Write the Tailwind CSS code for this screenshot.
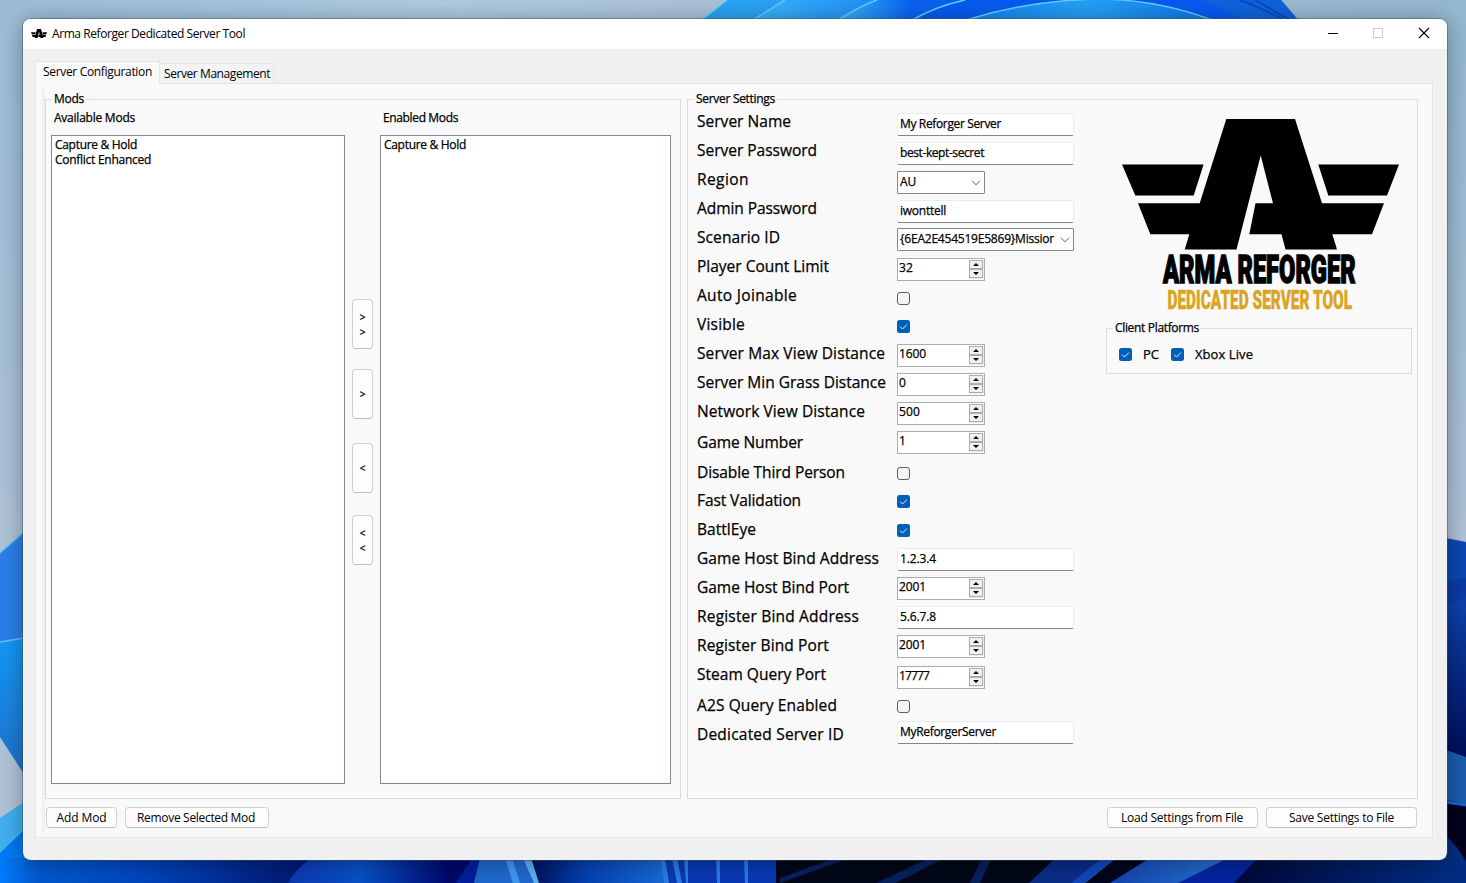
<!DOCTYPE html>
<html lang="en">
<head>
<meta charset="utf-8">
<title>Arma Reforger Dedicated Server Tool</title>
<script src="https://cdn.jsdelivr.net/npm/@tailwindcss/browser@4"></script>
</head>
<body class="relative h-[883px] w-[1466px] overflow-hidden bg-[#a4c0d8] font-['Open_Sans',sans-serif] text-[12px] font-medium leading-[15px] text-black [-webkit-text-stroke:0.25px_black]">

<!-- Desktop wallpaper -->
<svg class="absolute inset-0" width="1466" height="883" viewBox="0 0 1466 883">
  <defs>
    <linearGradient id="sky" x1="0" y1="0" x2="1" y2="0"><stop offset="0" stop-color="#9cbcd6"/><stop offset=".3" stop-color="#adcae0"/><stop offset=".6" stop-color="#a9bdd2"/><stop offset="1" stop-color="#94b8d0"/></linearGradient>
    <linearGradient id="haze" x1="0" y1="0" x2="0" y2="1"><stop offset="0" stop-color="#a9bfd6" stop-opacity="0"/><stop offset=".6" stop-color="#afc2d6"/></linearGradient>
    <linearGradient id="p1" x1="0" x2="1" y1="0" y2="0"><stop offset="0" stop-color="#2ba4f2"/><stop offset="1" stop-color="#1f8cf4"/></linearGradient>
    <linearGradient id="p2" x1="0" x2="1" y1="0" y2="0"><stop offset="0" stop-color="#38b6fa"/><stop offset=".45" stop-color="#0a62f0"/><stop offset="1" stop-color="#0a62f0"/></linearGradient>
    <linearGradient id="p3" x1="0" x2="1" y1="0" y2="0"><stop offset="0" stop-color="#1583ee"/><stop offset=".5" stop-color="#24a0f6"/><stop offset="1" stop-color="#1173ea"/></linearGradient>
    <linearGradient id="b0" x1="0" x2="1" y1="0" y2="0"><stop offset="0" stop-color="#007cfa"/><stop offset=".12" stop-color="#0059cc"/><stop offset=".45" stop-color="#0044bc"/><stop offset="1" stop-color="#001468"/></linearGradient>
    <linearGradient id="b1" x1="0" x2="1" y1="0" y2="0"><stop offset="0" stop-color="#0e38b0"/><stop offset=".35" stop-color="#0850c6"/><stop offset=".75" stop-color="#00086c"/><stop offset="1" stop-color="#000660"/></linearGradient>
    <linearGradient id="b2" x1="0" x2="1" y1="0" y2="0"><stop offset="0" stop-color="#001058"/><stop offset=".4" stop-color="#0440b0"/><stop offset="1" stop-color="#1868d4"/></linearGradient>
    <linearGradient id="b3" x1="0" x2="1" y1="0" y2="0"><stop offset="0" stop-color="#1145b0"/><stop offset="1" stop-color="#2a70cc"/></linearGradient>
    <linearGradient id="b4" x1="0" x2="1" y1="0" y2="0"><stop offset="0" stop-color="#000838"/><stop offset="1" stop-color="#003088"/></linearGradient>
    <linearGradient id="r1" x1="0" x2="0" y1="0" y2="1"><stop offset="0" stop-color="#0c44ac"/><stop offset="1" stop-color="#000c58"/></linearGradient>
    <linearGradient id="l1" x1="0" x2="0" y1="0" y2="1"><stop offset="0" stop-color="#1398f4"/><stop offset="1" stop-color="#2070cc"/></linearGradient>
  </defs>
  <rect width="1466" height="883" fill="url(#sky)"/>
  <rect y="40" width="1466" height="843" fill="url(#haze)"/>
  <!-- top petals -->
  <path d="M702 20L727 0H1281L1298 20Z" fill="url(#p1)"/>
  <path d="M753 20L785 0H1281L1298 20Z" fill="url(#p2)"/>
  <path d="M838 20Q858 7 877 0H1000V20Z" fill="url(#p2)"/>
  <path d="M912 20Q937 6 965 0H1195Q1224 7 1246 20Z" fill="#075af0"/>
  <path d="M966 20Q1030 0 1100 -1Q1160 0 1212 20Z" fill="url(#p3)"/>
  <path d="M1195 0Q1224 7 1246 20H1298L1281 0Z" fill="#0f63dc"/>
  <g fill="none" stroke="#62cdf8" stroke-width="1.500"><path d="M702 20L727 0M753 20L785 0M838 20Q858 7 877 0M912 20Q937 6 965 0M966 20Q1030 0 1100 -1Q1160 0 1212 20"/></g>
  <path d="M1240 0Q1266 10 1284 20M1255 0L1290 20" fill="none" stroke="#0848c4" stroke-width="2"/>
  <!-- left petals -->
  <path d="M0 553L24 532V650H0Z" fill="#2c7fe8"/>
  <path d="M0 642L24 638V774L0 737Z" fill="url(#l1)"/>
  <path d="M0 553L24 532M0 642L24 638" stroke="#58c4f4" stroke-width="1.500"/>
  <path d="M0 818L24 802V883H0Z" fill="#40b0f0"/>
  <path d="M0 853L24 830V883H0Z" fill="#0078f6"/>
  <!-- bottom petals -->
  <path d="M0 858H320V883H0Z" fill="url(#b0)"/>
  <path d="M288 883Q296 868 312 858H500V883Z" fill="url(#b1)"/>
  <path d="M456 883L472 858H510V883Z" fill="#00209a"/>
  <path d="M474 883L480 858H530L539 883Z" fill="#2068cc"/>
  <path d="M505 858L513 883H520L512 858Z" fill="#3e98ec"/>
  <path d="M523 858L534 883H539L531 858Z" fill="#58b0f0"/>
  <path d="M531 858H664V883H539Z" fill="url(#b2)"/>
  <path d="M660 858H776V883H664Z" fill="#0838b4"/>
  <path d="M660 858H665L669 883H664ZM672 858H677L682 883H677ZM684 858H688V883H686ZM716 858H720V883H717ZM744 858H748V883H745Z" fill="#2a7ce0"/>
  <path d="M776 858H1070L1035 883H776Z" fill="#020818"/>
  <path d="M850 858H835L780 878V883ZM930 858H945L895 883H876ZM982 858H992L980 883H970Z" fill="#08205c"/>
  <path d="M1056 858H1110L1080 883H1029Z" fill="#0a2c84"/>
  <path d="M1102 858H1116L1085 883H1071Z" fill="#1146bc"/>
  <path d="M1116 858H1240L1190 883H1085Z" fill="#010620"/>
  <path d="M1150 858H1230L1180 883H1110Z" fill="url(#b3)"/>
  <path d="M1228 858H1260L1235 883H1178Z" fill="#0524a0"/>
  <path d="M1258 858H1466V883H1234Z" fill="url(#b4)"/>
  <!-- right petals -->
  <path d="M1446 538L1466 542V883H1446Z" fill="#0a48b4"/>
  <path d="M1446 582L1466 578V883H1446Z" fill="#0a3aa4"/>
  <path d="M1446 605L1466 597V760H1446Z" fill="url(#r1)"/>
  <path d="M1446 750L1466 757V808H1446Z" fill="#1a5cac"/>
  <path d="M1446 800L1466 804V883H1446Z" fill="#00021c"/>
  <path d="M1446 802L1466 805" stroke="#1464dc" stroke-width="3"/>
  <path d="M1446 836Q1458 846 1466 862V883H1446Z" fill="#002c80"/>
</svg>

<!-- Application window -->
<main class="absolute left-[23px] top-[19px] flex h-[841px] w-[1424px] flex-col overflow-hidden rounded-lg bg-[#f0f0f0] shadow-[0_0_0_1px_rgba(60,80,100,0.45),0_2px_22px_rgba(0,0,0,0.35)]">
  <header class="flex h-[30px] shrink-0 items-center bg-white pb-px pl-2 [-webkit-text-stroke:0]">
    <svg width="16" height="9" viewBox="1122 119 277 131" preserveAspectRatio="none"><use href="#wings"/></svg>
    <h1 class="ml-[5px] font-normal whitespace-nowrap"><span data-w="193">Arma Reforger Dedicated Server Tool</span></h1>
    <svg class="mb-px ml-auto mr-[17px]" width="103" height="12" viewBox="0 0 103 12" fill="none">
      <path d="M1 6.500H11" stroke="#000"/>
      <rect x="46.500" y="1.500" width="9" height="9" stroke="#ccc"/>
      <path d="M92 1L102 11M102 1L92 11" stroke="#000" stroke-width="1.100"/>
    </svg>
  </header>

  <div class="flex flex-1 flex-col pl-3 pr-[14px] pt-3">
    <nav class="flex h-[22px] items-end font-normal [-webkit-text-stroke:0]">
      <div class="z-10 -mb-px h-[23px] w-[125px] border border-b-0 border-[#e5e5e5] bg-[#f9f9f9] pl-[7px] pt-[2px] whitespace-nowrap"><span data-w="109">Server Configuration</span></div>
      <div class="h-5 w-[114px] border border-b-0 border-l-0 border-[#e5e5e5] bg-[#f3f3f3] pl-1 pt-[2px] whitespace-nowrap"><span data-w="106">Server Management</span></div>
    </nav>

    <section class="flex h-[755px] flex-col border border-[#e5e5e5] bg-[#f9f9f9] pl-[6px] pr-[14px] pt-1 shadow-[2px_2px_0_#f3f3f3]">
      <div class="flex h-[745px] flex-col border-l-[3px] border-[#f0f0f0]">
        <div class="flex gap-[6px] pt-[11px]">

          <!-- Mods -->
          <fieldset class="relative flex h-[700px] w-[636px] border border-[#dcdcdc] pl-[5px]">
            <div class="absolute -top-[9px] left-[6px] bg-[#f9f9f9] px-[2px]"><span data-w="30">Mods</span></div>
            <div class="w-[294px] pt-[10px]">
              <div class="h-[25px] pl-[3px]"><span data-w="81">Available Mods</span></div>
              <div class="h-[649px] border border-[#828790] bg-white pl-[3px] pt-px">
                <div><span data-w="82">Capture &amp; Hold</span></div>
                <div><span data-w="96">Conflict Enhanced</span></div>
              </div>
            </div>
            <div class="ml-[7px] flex w-[21px] flex-col pt-[199px] text-center text-[10px]">
              <button class="h-[50px] rounded border border-[#d0d0d0] border-b-[#bdbdbd] bg-[#fdfdfd] pt-0.5">&gt;<br>&gt;</button>
              <button class="mt-5 h-[50px] rounded border border-[#d0d0d0] border-b-[#bdbdbd] bg-[#fdfdfd]">&gt;</button>
              <button class="mt-6 h-[50px] rounded border border-[#d0d0d0] border-b-[#bdbdbd] bg-[#fdfdfd]">&lt;</button>
              <button class="mt-[22px] h-[50px] rounded border border-[#d0d0d0] border-b-[#bdbdbd] bg-[#fdfdfd] pt-0.5">&lt;<br>&lt;</button>
            </div>
            <div class="ml-[7px] w-[291px] pt-[10px]">
              <div class="h-[25px] pl-[3px]"><span data-w="75">Enabled Mods</span></div>
              <div class="h-[649px] border border-[#828790] bg-white pl-[3px] pt-px">
                <div><span data-w="82">Capture &amp; Hold</span></div>
              </div>
            </div>
          </fieldset>

          <!-- Server settings -->
          <fieldset class="relative flex h-[700px] w-[731px] border border-[#dcdcdc] pl-[9px]">
            <div class="absolute -top-[9px] left-[6px] bg-[#f9f9f9] px-[2px]"><span data-w="79">Server Settings</span></div>
            <div id="settings" class="w-[409px] pt-[7px]"></div>

            <div class="flex flex-col pt-[19px]">
              <svg width="306" height="194" viewBox="1106 119 306 194">
                <g id="wings">
                  <path d="M1226.300 119H1295L1322 203.300H1384L1372 234.300H1332.300L1337 249.500H1285.500L1281.500 234.300H1249.300L1255.500 203.300H1273L1260.700 155.500L1236.500 249.500H1184.700L1189.300 234.300H1150.300L1138 203.300H1199.700Z"/>
                  <path d="M1122 164.600H1203.600L1193.700 195.500H1135.300ZM1318.300 164.600H1399L1387 195.500H1328.300Z"/>
                </g>
                <g transform="translate(1163 282.500)"><text data-scale="192.500" font-family="Roboto" font-weight="900" font-size="38" stroke="#000" stroke-width="1.500">ARMA REFORGER</text></g>
                <g transform="translate(1167.500 308.800)"><text data-scale="184.500" font-family="Roboto" font-weight="900" font-size="26.500" fill="#daa520" stroke="#daa520" stroke-width=".4">DEDICATED SERVER TOOL</text></g>
              </svg>
              <div class="relative mt-[15px] flex h-[46px] items-center border border-[#dcdcdc] pl-3 pt-[7px]">
                <div class="absolute -top-[9px] left-[6px] bg-[#f9f9f9] px-[2px]"><span data-w="84">Client Platforms</span></div>
                <svg class="mr-[11px] shrink-0" width="13" height="13" viewBox="0 0 13 13"><rect width="13" height="13" rx="2.500" fill="#005fb8"/><path d="M3.200 6.700L5.500 9L10 4.500" fill="none" stroke="#fff" stroke-width=".9"/></svg>
                <span class="text-[13px]" data-w="16">PC</span>
                <svg class="ml-[12px] mr-[11px] shrink-0" width="13" height="13" viewBox="0 0 13 13"><rect width="13" height="13" rx="2.500" fill="#005fb8"/><path d="M3.200 6.700L5.500 9L10 4.500" fill="none" stroke="#fff" stroke-width=".9"/></svg>
                <span class="text-[13px]" data-w="58">Xbox Live</span>
              </div>
            </div>
          </fieldset>
        </div>

        <footer class="mt-2 flex h-[21px] pl-px font-normal [-webkit-text-stroke:0]">
          <button class="h-[21px] w-[71px] rounded border border-[#d0d0d0] border-b-[#bdbdbd] bg-[#fdfdfd] whitespace-nowrap"><span data-w="50">Add Mod</span></button>
          <button class="ml-2 h-[21px] w-[144px] rounded border border-[#d0d0d0] border-b-[#bdbdbd] bg-[#fdfdfd] pr-0.5 whitespace-nowrap"><span data-w="118">Remove Selected Mod</span></button>
          <button class="ml-auto h-[21px] w-[151px] rounded border border-[#d0d0d0] border-b-[#bdbdbd] bg-[#fdfdfd] pr-px whitespace-nowrap"><span data-w="122">Load Settings from File</span></button>
          <button class="ml-2 mr-px h-[21px] w-[151px] rounded border border-[#d0d0d0] border-b-[#bdbdbd] bg-[#fdfdfd] whitespace-nowrap"><span data-w="105">Save Settings to File</span></button>
        </footer>
      </div>
    </section>
  </div>
</main>

<script>
const text = (t, w) => `<span data-w="${w}">${t}</span>`;
const controls = {
  entry: (t, w) => `<div class="flex h-[23px] w-[177px] items-center rounded-[2px] border border-[#ececec] border-b-[#868686] bg-white pb-0.5 pl-0.5 whitespace-nowrap">${text(t, w)}</div>`,
  combo: (t, w, wide) => `<div class="${wide ? 'w-[177px]' : 'w-[88px]'} flex h-[23px] items-center justify-between rounded-[1px] border border-[#868686] bg-white pb-0.5 pl-0.5 pr-[3px] whitespace-nowrap">${text(t, w)}<svg class="mt-0.5" width="10" height="6" viewBox="0 0 10 6"><path d="M1 .8L5 4.800L9 .8" fill="none" stroke="#5f5f5f"/></svg></div>`,
  spin: (t, w) => `<div class="flex h-[23px] w-[88px] justify-between border border-[#ababb0] bg-white pl-px pt-px"><span>${text(t, w)}</span><svg width="15" height="19" viewBox="0 0 15 19"><rect width="15" height="19" fill="#ececec"/><rect x=".5" y=".5" width="13" height="8" fill="#f0f0f0" stroke="#acacac"/><rect x=".5" y="9.500" width="13" height="8" fill="#f0f0f0" stroke="#acacac"/><path d="M7 3L10 6H4ZM7 15L10 12H4Z"/></svg></div>`,
  off: () => `<svg width="13" height="13" viewBox="0 0 13 13"><rect x=".5" y=".5" width="12" height="12" rx="2.500" fill="#f5f5f5" stroke="#5e5e5e"/></svg>`,
  on: () => `<svg width="13" height="13" viewBox="0 0 13 13"><rect width="13" height="13" rx="2.500" fill="#005fb8"/><path d="M3.200 6.700L5.500 9L10 4.500" fill="none" stroke="#fff" stroke-width=".9"/></svg>`
};
// label, label width, row height, control offset, control kind, value, value width, wide
const rows = [
  ['Server Name', 94, 'h-[29px]', 'mt-[6px]', 'entry', 'My Reforger Server', 101],
  ['Server Password', 120, 'h-[29px]', 'mt-[6px]', 'entry', 'best-kept-secret', 84],
  ['Region', 52, 'h-[29px]', 'mt-[6px]', 'combo', 'AU', 16],
  ['Admin Password', 120, 'h-[29px]', 'mt-[6px]', 'entry', 'iwonttell', 46],
  ['Scenario ID', 83, 'h-[29px]', 'mt-[5px]', 'combo', '{6EA2E454519E5869}Missior', 154, true],
  ['Player Count Limit', 132, 'h-[29px]', 'mt-[6px]', 'spin', '32', 14],
  ['Auto Joinable', 100, 'h-[29px]', 'mt-[11px]', 'off'],
  ['Visible', 48, 'h-[29px]', 'mt-[10px]', 'on'],
  ['Server Max View Distance', 188, 'h-[29px]', 'mt-[5px]', 'spin', '1600', 27],
  ['Server Min Grass Distance', 189, 'h-[29px]', 'mt-[5px]', 'spin', '0', 7],
  ['Network View Distance', 168, 'h-[31px]', 'mt-[5px]', 'spin', '500', 21],
  ['Game Number', 106, 'h-[30px]', 'mt-[3px]', 'spin', '1', 7],
  ['Disable Third Person', 148, 'h-[28px]', 'mt-[9px]', 'off'],
  ['Fast Validation', 104, 'h-[29px]', 'mt-[9px]', 'on'],
  ['BattlEye', 59, 'h-[29px]', 'mt-[9px]', 'on'],
  ['Game Host Bind Address', 182, 'h-[29px]', 'mt-[4px]', 'entry', '1.2.3.4', 36],
  ['Game Host Bind Port', 152, 'h-[29px]', 'mt-[4px]', 'spin', '2001', 27],
  ['Register Bind Address', 162, 'h-[29px]', 'mt-[4px]', 'entry', '5.6.7.8', 36],
  ['Register Bind Port', 132, 'h-[29px]', 'mt-[4px]', 'spin', '2001', 27],
  ['Steam Query Port', 129, 'h-[31px]', 'mt-[6px]', 'spin', '17777', 30],
  ['A2S Query Enabled', 140, 'h-[29px]', 'mt-[9px]', 'off'],
  ['Dedicated Server ID', 147, 'h-[29px]', 'mt-[1px]', 'entry', 'MyReforgerServer', 96]
];
document.getElementById('settings').innerHTML = rows.map(([label, lw, h, mt, kind, value, vw, wide]) =>
  `<div class="${h} flex items-start"><div class="w-[200px] shrink-0 whitespace-nowrap text-[15.5px] leading-[29px] font-medium">${text(label, lw)}</div><div class="${mt}">${controls[kind](value, vw, wide)}</div></div>`
).join('');

// Even out letter spacing so that each text fills its given width
function fitText() {
  for (const el of document.querySelectorAll('[data-w]')) {
    el.style.letterSpacing = '0px';
    const n = el.textContent.length;
    const d = (Number(el.dataset.w) - el.getBoundingClientRect().width) / n;
    el.style.letterSpacing = d.toFixed(3) + 'px';
  }
  for (const el of document.querySelectorAll('[data-scale]')) {
    el.setAttribute('transform', `scale(${Number(el.dataset.scale) / el.getComputedTextLength()} 1)`);
  }
}
window.addEventListener('load', () => {
  fitText();
  document.fonts.ready.then(fitText);
  requestAnimationFrame(fitText);
});
</script>
</body>
</html>
